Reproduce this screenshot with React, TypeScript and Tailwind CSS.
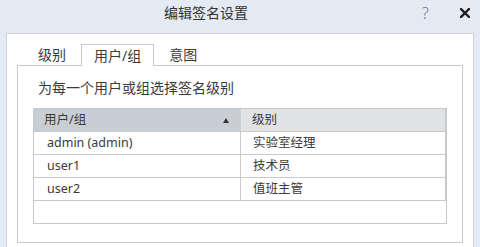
import React from "react";

const rows = [
  { user: "admin (admin)", level: "实验室经理" },
  { user: "user1", level: "技术员" },
  { user: "user2", level: "值班主管" },
];

function Tab({ label, active }: { label: string; active?: boolean }) {
  return (
    <div
      className={`h-[21px] px-3 flex items-center text-[14px] leading-[20px] ${
        active
          ? "bg-white border border-b-0 border-[#c6c9cd] -mb-px h-[22px] relative z-10"
          : "border border-transparent"
      }`}
    >
      {label}
    </div>
  );
}

export default function App() {
  return (
    <div
      className="w-[480px] h-[247px] overflow-hidden bg-[#e4eaf3] text-[#3a3a3a]"
      style={{ fontFamily: '"Noto Sans", "Noto Sans CJK SC", sans-serif' }}
    >
      {/* title bar */}
      <div className="h-[33px] flex items-start pt-[3px]">
        <div className="flex-1 text-center text-[14px] leading-[20px] text-[#333]">编辑签名设置</div>
        <div className="w-[68px] flex items-start">
          <span className="ml-[10px] text-[16px] leading-[20px] text-[#6f757c] font-light">?</span>
          <svg className="ml-[31px] mt-[5px]" width="10" height="10" viewBox="0 0 10 10">
            <path d="M1 1 L9 9 M9 1 L1 9" stroke="#1e1e1e" strokeWidth="2.4" strokeLinecap="square" />
          </svg>
        </div>
      </div>

      {/* outer white panel */}
      <div className="mx-[6px] h-[220px] bg-white border border-[#cfd3d8] border-b-0 px-[10px] pt-[10px]">
        <div className="flex items-end pl-[8px] gap-[2px] h-[21px]">
          <Tab label="级别" />
          <Tab label="用户/组" active />
          <Tab label="意图" />
        </div>

        <div className="h-[178px] border border-[#c6c9cd] px-[15px]">
          <div className="pl-[5px] mt-[12px] text-[14px] leading-[20px]">为每一个用户或组选择签名级别</div>

          <div className="mt-[10px] border border-[#c5c9cd] text-[12.5px]">
            <div className="border-r-[1px] border-[#c5c9cd]">
              <div className="flex h-[22px]">
                <div className="w-[207px] bg-[#c9ced2] flex items-center pl-[10px] pr-[12px] justify-between">
                  <span>用户/组</span>
                  <svg width="6" height="5" viewBox="0 0 6 5">
                    <path d="M3 0 L6 5 L0 5 Z" fill="#333" />
                  </svg>
                </div>
                <div className="flex-1 bg-[#e1e2e4] flex items-center pl-[11px]">级别</div>
              </div>
              {rows.map(r => (
                <div key={r.user} className="flex h-[23px] border-t border-[#c8cbce]">
                  <div className="w-[207px] border-r border-[#c8cbce] flex items-center pl-[13px]">{r.user}</div>
                  <div className="flex-1 flex items-center pl-[12px]">{r.level}</div>
                </div>
              ))}
            </div>
            <div className="h-[23px] border-t border-[#c5c9cd]" />
          </div>
        </div>
      </div>
    </div>
  );
}
